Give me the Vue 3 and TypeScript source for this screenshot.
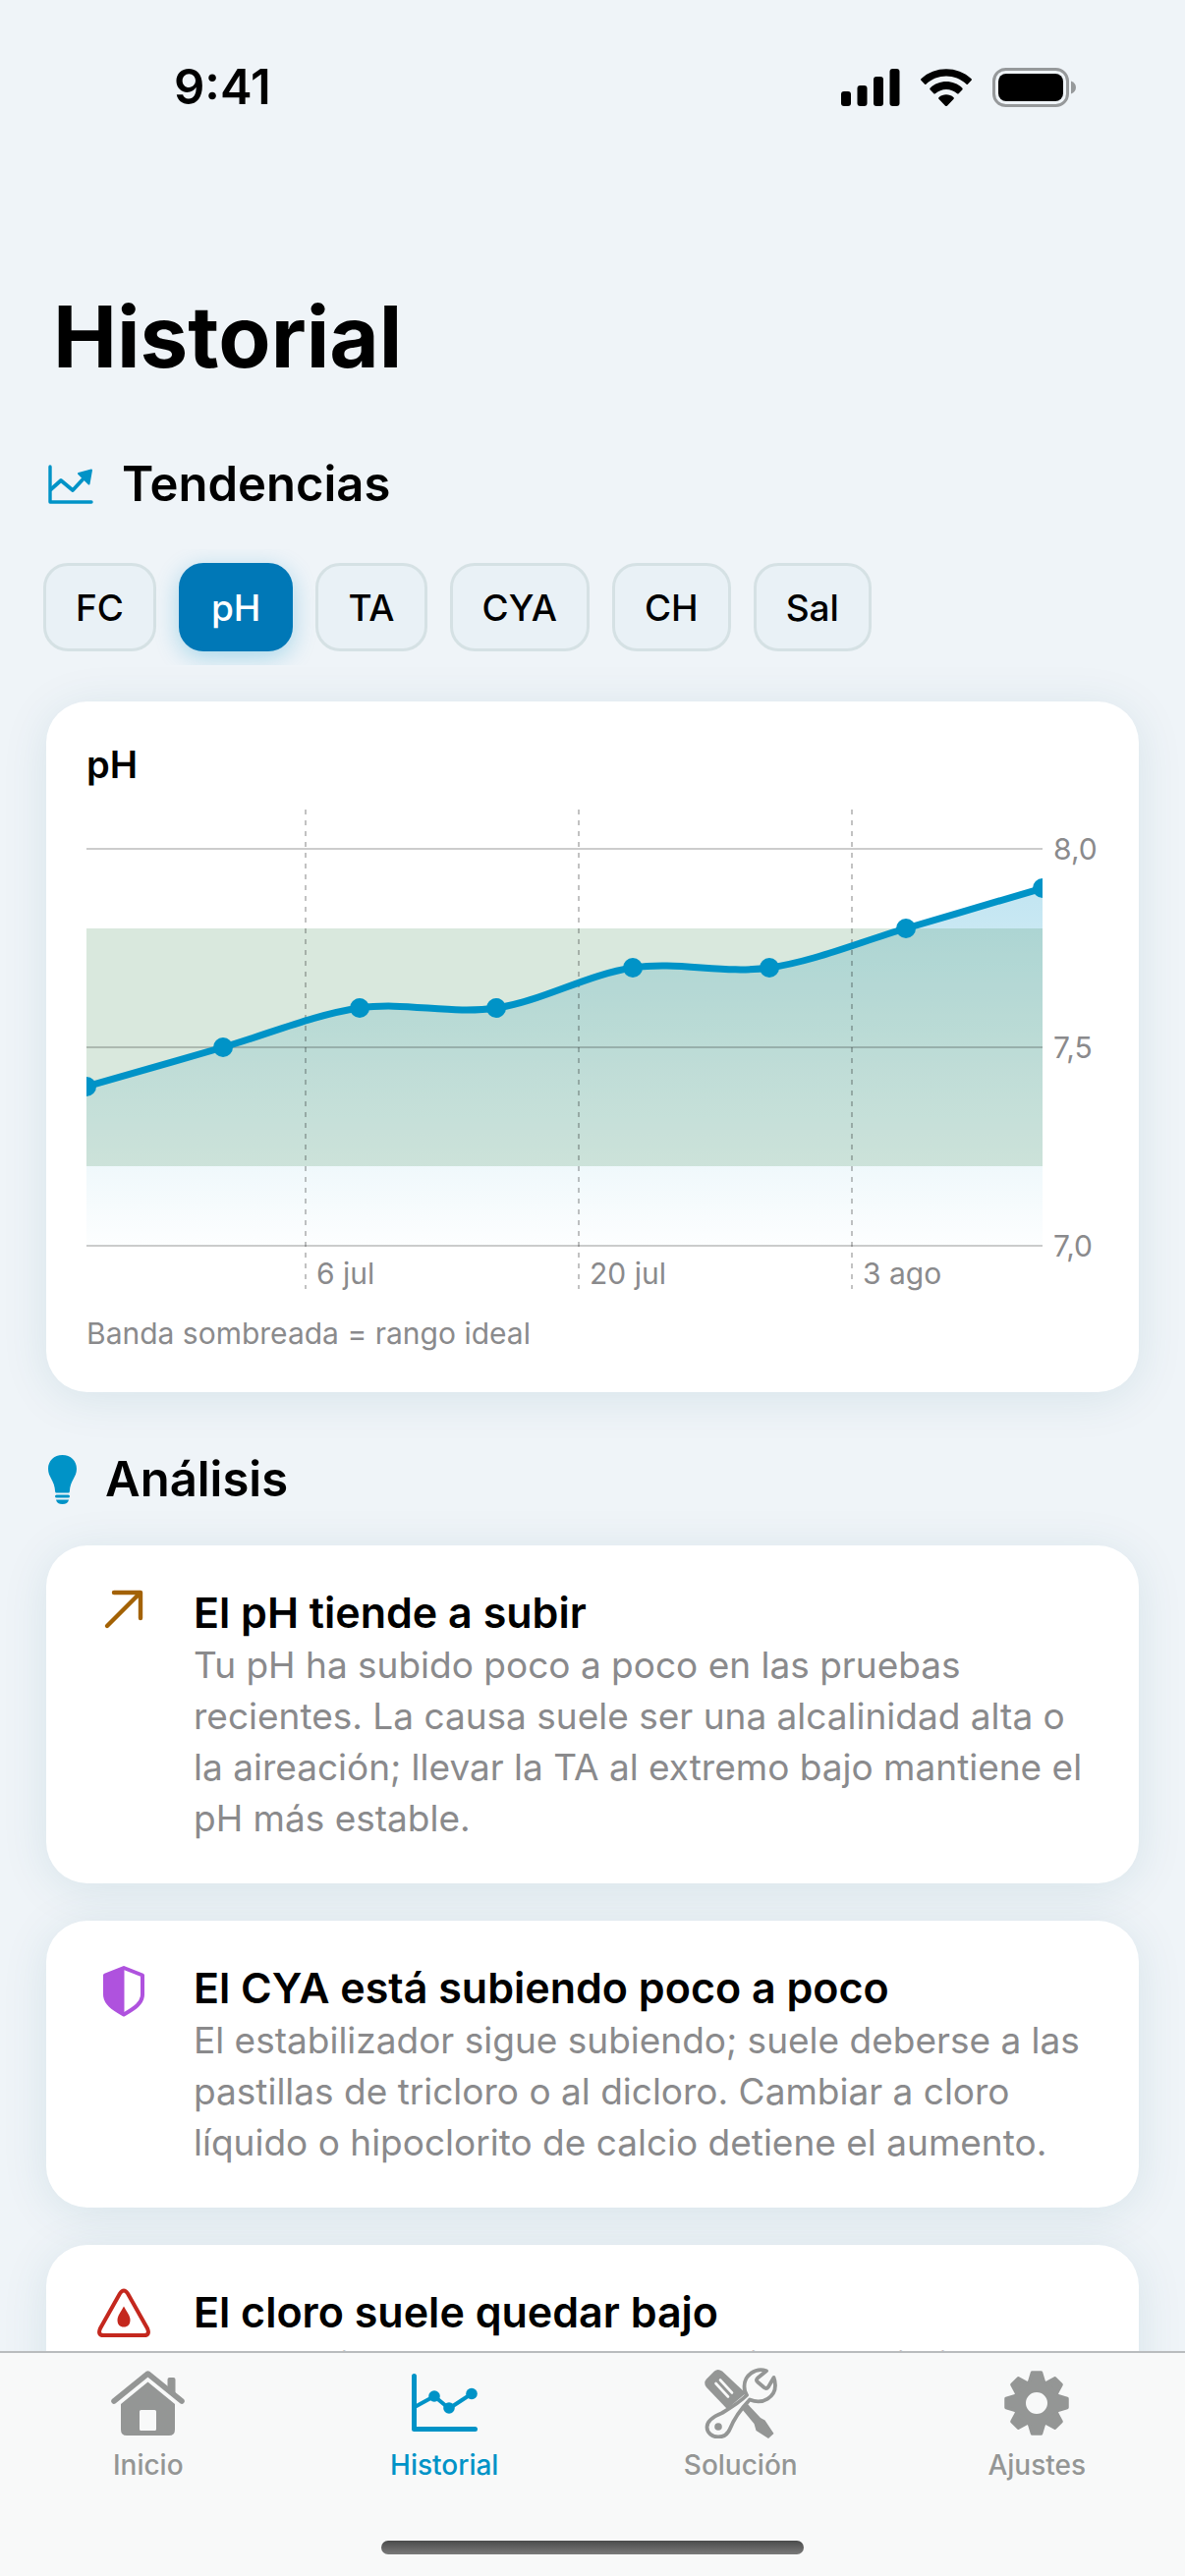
<script setup lang="ts">
import { computed, ref } from 'vue'

type Metric = 'FC' | 'pH' | 'TA' | 'CYA' | 'CH' | 'Sal'
type Icon = 'rise' | 'shield' | 'alert'

interface Insight {
  icon: Icon
  title: string
  body: string
}

const metrics: Metric[] = ['FC', 'pH', 'TA', 'CYA', 'CH', 'Sal']
const selected = ref<Metric>('pH')

const insights: Insight[] = [
  {
    icon: 'rise',
    title: 'El pH tiende a subir',
    body: 'Tu pH ha subido poco a poco en las pruebas recientes. La causa suele ser una alcalinidad alta o la aireación; llevar la TA al extremo bajo mantiene el pH más estable.',
  },
  {
    icon: 'shield',
    title: 'El CYA está subiendo poco a poco',
    body: 'El estabilizador sigue subiendo; suele deberse a las pastillas de tricloro o al dicloro. Cambiar a cloro líquido o hipoclorito de calcio detiene el aumento.',
  },
  {
    icon: 'alert',
    title: 'El cloro suele quedar bajo',
    body: 'El cloro libre ha estado por debajo del objetivo en varias pruebas recientes.',
  },
]

const PLOT_WIDTH = 973
const readings = [7.4, 7.5, 7.6, 7.6, 7.7, 7.7, 7.8, 7.9]
const yTicks = [
  { value: 8, label: '8,0' },
  { value: 7.5, label: '7,5' },
  { value: 7, label: '7,0' },
]
const xTicks = [
  { x: 223, label: '6 jul' },
  { x: 501, label: '20 jul' },
  { x: 779, label: '3 ago' },
]

const yFor = (value: number): number => Math.round(40 + (8 - value) * 404)

const points = computed(() =>
  readings.map((value, i) => ({
    x: (i * PLOT_WIDTH) / (readings.length - 1),
    y: yFor(value),
  })),
)

// Catmull-Rom spline through the readings, written as cubic Béziers
const linePath = computed(() => {
  const p = points.value
  let d = `M${p[0].x} ${p[0].y}`
  for (let i = 0; i < p.length - 1; i++) {
    const before = p[Math.max(i - 1, 0)]
    const from = p[i]
    const to = p[i + 1]
    const after = p[Math.min(i + 2, p.length - 1)]
    d += ` C${from.x + (to.x - before.x) / 6} ${from.y + (to.y - before.y) / 6}`
    d += ` ${to.x - (after.x - from.x) / 6} ${to.y - (after.y - from.y) / 6} ${to.x} ${to.y}`
  }
  return d
})
const areaPath = computed(() => `${linePath.value} V${yFor(7)} H0 Z`)

const teeth = [0, 45, 90, 135, 180, 225, 270, 315]
</script>

<template>
  <div class="screen">
    <header class="status">
      <span class="time">9:41</span>
      <div class="status-icons">
        <svg width="60" height="40" viewBox="0 0 60 40" aria-hidden="true">
          <rect x="0" y="24" width="10" height="15" rx="3" />
          <rect x="16.500" y="18" width="10" height="21" rx="3" />
          <rect x="33" y="9" width="10" height="30" rx="3" />
          <rect x="49.500" y="1" width="10" height="38" rx="3" />
        </svg>
        <svg width="54" height="38" viewBox="0 0 17 12" aria-hidden="true">
          <path d="M8.500 2.400c2.400 0 4.700.9 6.500 2.600.1.1.3.1.4 0l1.200-1.300c.1-.1.1-.4 0-.5C12.100-1 4.900-1 .4 3.200c-.1.1-.1.4 0 .5L1.600 5c.1.1.3.1.4 0C3.800 3.300 6.100 2.400 8.500 2.400Z" />
          <path d="M8.500 6.600c1.300 0 2.600.5 3.500 1.400.1.1.3.1.5 0l1.200-1.300c.1-.2.1-.4 0-.5-2.900-2.800-7.500-2.800-10.400 0-.1.1-.1.4 0 .5L4.500 8c.1.1.3.1.5 0 1-.9 2.200-1.400 3.500-1.400Z" />
          <path d="M10.900 9.200c.1.1.1.4 0 .5l-2.100 2.200c-.1.1-.2.1-.3.1s-.2 0-.3-.1L6.100 9.700c-.1-.1-.1-.4 0-.5 1.400-1.200 3.400-1.200 4.800 0Z" />
        </svg>
        <svg width="86" height="40" viewBox="0 0 86 40" aria-hidden="true">
          <rect x="1.500" y="1.500" width="75" height="37" rx="12" fill="none" stroke="#96999b" stroke-width="3" />
          <rect x="6" y="6" width="66" height="28" rx="8" />
          <path d="M80 13.500c3 1 5 3.500 5 6.500s-2 5.500-5 6.500Z" fill="#96999b" />
        </svg>
      </div>
    </header>

    <main class="content">
      <h1 class="page-title">Historial</h1>

      <h2 class="section-title">
        <svg width="46" height="40" viewBox="0 0 46 40" aria-hidden="true">
          <g fill="none" stroke="#0093c7" stroke-linecap="round" stroke-linejoin="round">
            <path d="M2 2V38H44" stroke-width="3.400" />
            <path d="M3 25L13 16L25 26L38 12" stroke-width="3.800" />
          </g>
          <path d="M44 5.500L31 9L41.500 19.500Z" fill="#0093c7" stroke="#0093c7" stroke-width="2" stroke-linejoin="round" />
        </svg>
        Tendencias
      </h2>

      <div class="chips">
        <button
          v-for="metric in metrics"
          :key="metric"
          type="button"
          class="chip"
          :class="{ active: metric === selected }"
          :aria-pressed="metric === selected"
          @click="selected = metric"
        >
          {{ metric }}
        </button>
      </div>

      <section class="card chart-card">
        <h3 class="chart-title">{{ selected }}</h3>
        <svg class="chart" viewBox="0 0 1030 490" role="img" aria-label="Tendencia de pH">
          <defs>
            <linearGradient id="area-fill" x1="0" y1="0" x2="0" y2="1">
              <stop offset="0" stop-color="#0093c7" stop-opacity="0.24" />
              <stop offset="1" stop-color="#0093c7" stop-opacity="0.01" />
            </linearGradient>
            <clipPath id="plot-area">
              <rect x="0" y="0" :width="PLOT_WIDTH" height="490" />
            </clipPath>
          </defs>
          <path :d="areaPath" fill="url(#area-fill)" />
          <rect class="band" x="0" :y="yFor(7.8)" :width="PLOT_WIDTH" :height="yFor(7.2) - yFor(7.8)" />
          <g v-for="tick in yTicks" :key="tick.label">
            <line class="grid" x1="0" :x2="PLOT_WIDTH" :y1="yFor(tick.value)" :y2="yFor(tick.value)" />
            <text class="axis" :x="PLOT_WIDTH + 11" :y="yFor(tick.value) + 11">{{ tick.label }}</text>
          </g>
          <g v-for="tick in xTicks" :key="tick.label">
            <line class="grid dashed" :x1="tick.x" :x2="tick.x" y1="0" y2="488" />
            <text class="axis" :x="tick.x + 11" y="483">{{ tick.label }}</text>
          </g>
          <g clip-path="url(#plot-area)">
            <path class="line" :d="linePath" />
            <circle v-for="(p, i) in points" :key="i" class="dot" :cx="p.x" :cy="p.y" r="10" />
          </g>
        </svg>
        <p class="legend">Banda sombreada = rango ideal</p>
      </section>

      <h2 class="section-title analysis">
        <svg width="29" height="50" viewBox="0 0 29 50" fill="#0093c7" aria-hidden="true">
          <path d="M14.500 0C6 0 0 6 0 14C0 23 6.500 25 7.200 37.500Q7.300 38.500 8.300 38.500H20.700Q21.700 38.500 21.800 37.500C22.500 25 29 23 29 14C29 6 23 0 14.500 0Z" />
          <rect x="7" y="40.500" width="15" height="3" rx="1.500" />
          <path d="M8 45.500H21C20.500 48.500 18 50 14.500 50S8.500 48.500 8 45.500Z" />
        </svg>
        Análisis
      </h2>

      <div class="insights">
        <article v-for="item in insights" :key="item.title" class="card insight">
          <svg class="insight-icon" width="74" height="60" viewBox="0 0 74 60" aria-hidden="true">
            <path
              v-if="item.icon === 'rise'"
              d="M20 42L54 8M27 8H54V34"
              fill="none"
              stroke="#a36205"
              stroke-width="4.400"
              stroke-linecap="round"
              stroke-linejoin="round"
            />
            <g v-else-if="item.icon === 'shield'" fill="#af52de" stroke="#af52de" stroke-linejoin="round">
              <path d="M37 8L56 15.500V35C56 44 48 49 37 55.500C26 49 18 44 18 35V15.500Z" fill="none" stroke-width="4" />
              <path d="M37 8L18 15.500V35C18 44 26 49 37 55.500Z" stroke-width="1" />
            </g>
            <g v-else>
              <path
                d="M33 9.500Q37 3.500 41 9.500L61 45Q64 52 57.500 52H16.500Q10 52 13 45Z"
                fill="none"
                stroke="#c4281e"
                stroke-width="4"
                stroke-linejoin="round"
              />
              <path d="M37 22.500C40 28 43.500 32 43.500 36.500C43.500 41 41 43.500 37 43.500S30.500 41 30.500 36.500C30.500 32 34 28 37 22.500Z" fill="#c4281e" />
            </g>
          </svg>
          <div class="insight-text">
            <h3 class="insight-title">{{ item.title }}</h3>
            <p class="insight-body">{{ item.body }}</p>
          </div>
        </article>
      </div>
    </main>

    <nav class="tabs">
      <a class="tab" href="#inicio">
        <svg width="75" height="72" viewBox="0 -3 75 72" fill="#949695" aria-hidden="true">
          <path d="M3 31L37.500 3L72 31" fill="none" stroke="#949695" stroke-width="5.500" stroke-linecap="round" stroke-linejoin="round" />
          <path d="M57.500 20V9Q57.500 7 59.500 7H63.500Q65.500 7 65.500 9V27Z" />
          <path fill-rule="evenodd" d="M37.500 11.500L65 34V60Q65 66 59 66H16Q10 66 10 60V34ZM30.500 40Q29 40 29 41.500V59.500Q29 61 30.500 61H44.500Q46 61 46 59.500V41.500Q46 40 44.500 40Z" />
        </svg>
        Inicio
      </a>
      <a class="tab current" href="#historial" aria-current="page">
        <svg width="67" height="72" viewBox="0 -6 67 72" fill="#0093c7" stroke="#0093c7" aria-hidden="true">
          <g fill="none" stroke-linecap="round" stroke-linejoin="round">
            <path d="M2.500 2.500V56.500H64.500" stroke-width="5" />
            <path d="M3 34L23 23L38 35.500L61 20.500" stroke-width="4" />
          </g>
          <g stroke="none">
            <circle cx="23" cy="23" r="5.800" />
            <circle cx="38" cy="35" r="5.800" />
            <circle cx="61" cy="20.500" r="5.800" />
          </g>
        </svg>
        Historial
      </a>
      <a class="tab" href="#solucion">
        <svg width="74" height="72" viewBox="0 0 74 72" fill="#949695" aria-hidden="true">
          <path d="M10 3.500Q13.500 0.500 18 3.500L42 26L23 42L2 20Q-1.500 15.500 2 11.500Z" />
          <path d="M38 42L43 36L57 51L61.500 53.500L70.500 67L65 72L52.500 64L50.500 57Z" />
          <path d="M11.500 16L24 29.500M16 12.500L28 25.500" fill="none" stroke="#f8f9f9" stroke-width="2.600" stroke-linecap="round" />
          <path
            d="M63 3.200C52 -1 40.500 8 40.500 19C40.500 23 41.500 26 43 28C36 35 28 40 18 46C8 50 2.500 54 2.500 60.500C2.500 66.500 8 70.500 14 70.500C20 70.500 24 67 26 62C30 52 36 43 46 32.500C60 38.500 72 29 72 18C72 15 71.500 12.500 70.500 10L65 19.500Q63 22 60.500 20L54 14.500Q52 12.500 54 10.500Z"
            fill="#f8f9f9"
            stroke="#949695"
            stroke-width="3.800"
            stroke-linejoin="round"
          />
          <circle cx="14" cy="60" r="3.800" />
        </svg>
        Solución
      </a>
      <a class="tab" href="#ajustes">
        <svg width="66" height="72" viewBox="-33 -36 66 72" fill="#949695" aria-hidden="true">
          <circle r="17.500" fill="none" stroke="#949695" stroke-width="13" />
          <path
            v-for="angle in teeth"
            :key="angle"
            d="M-7.500 -21L-4.500 -31H4.500L7.500 -21Z"
            :transform="`rotate(${angle})`"
            stroke="#949695"
            stroke-width="3.500"
            stroke-linejoin="round"
          />
        </svg>
        Ajustes
      </a>
      <div class="home-indicator"></div>
    </nav>
  </div>
</template>

<style>
body {
  background: #eff4f8;
}
</style>

<style scoped>
.screen {
  display: flex;
  flex-direction: column;
  height: 100vh;
  overflow: hidden;
  background: #eff4f8;
  color: #000;
  font-family: Inter, 'Liberation Sans', sans-serif;
}

h1,
h2,
h3,
p {
  margin: 0;
}

.status {
  display: flex;
  flex: none;
  justify-content: space-between;
  align-items: center;
  height: 60px;
  padding: 59px 110px 170px 177px;
}

.time {
  font-size: 49px;
  font-weight: 600;
  line-height: 60px;
}

.status-icons {
  display: flex;
  align-items: center;
  gap: 20px;
}

.content {
  flex: 1;
  min-height: 0;
  overflow-y: auto;
  scrollbar-width: none;
}

.page-title {
  padding: 0 54px;
  font-size: 87px;
  font-weight: 700;
  line-height: 108px;
}

.section-title {
  display: flex;
  align-items: center;
  gap: 29px;
  margin-top: 66px;
  padding: 0 49px;
  font-size: 49px;
  font-weight: 600;
  line-height: 60px;
}

.section-title.analysis {
  margin-top: 59px;
}

.chips {
  display: flex;
  gap: 23px;
  margin-top: 36px;
  padding: 14px 44px;
  overflow-x: auto;
  scrollbar-width: none;
}

.chip {
  flex: none;
  height: 90px;
  padding: 0 30px;
  border: 3px solid #d5e1e4;
  border-radius: 25px;
  background: #e9f1f6;
  color: #000;
  font-family: inherit;
  font-size: 37px;
  font-weight: 500;
}

.chip.active {
  border-color: #0078b7;
  background: #0078b7;
  box-shadow: 0 6px 24px rgba(0, 147, 201, 0.3);
  color: #fff;
}

.card {
  margin: 0 47px;
  border-radius: 42px;
  background: #fff;
  box-shadow: 0 6px 48px rgba(0, 90, 110, 0.1);
}

.chart-card {
  margin-top: 37px;
  padding: 40px 41px;
}

.chart-title {
  font-size: 38px;
  font-weight: 600;
  line-height: 48px;
}

.chart {
  display: block;
  width: 100%;
  margin: 22px 0 23px;
}

.band {
  fill: rgba(65, 140, 85, 0.2);
}

.grid {
  stroke: rgba(0, 0, 0, 0.2);
  stroke-width: 2;
}

.dashed {
  stroke: rgba(0, 0, 0, 0.24);
  stroke-dasharray: 5 6;
}

.axis {
  fill: #8a8a8c;
  font-size: 30px;
}

.line {
  fill: none;
  stroke: #0093c7;
  stroke-width: 7;
}

.dot {
  fill: #0093c7;
}

.legend {
  color: #8a8a8c;
  font-size: 30px;
  line-height: 40px;
}

.insights {
  display: flex;
  flex-direction: column;
  gap: 38px;
  margin-top: 37px;
  padding-bottom: 38px;
}

.insight {
  display: flex;
  gap: 34px;
  padding: 40px 42px;
}

.insight-icon {
  flex: none;
}

.insight-title {
  font-size: 43px;
  font-weight: 600;
  line-height: 56px;
}

.insight-body {
  color: #8a8a8c;
  font-size: 37px;
  line-height: 52px;
}

.tabs {
  display: grid;
  flex: none;
  grid-template-columns: repeat(4, 1fr);
  padding: 15px 0 22px;
  border-top: 2px solid #b9bcbe;
  background: #f8f9f9;
}

.tab {
  display: flex;
  flex-direction: column;
  align-items: center;
  gap: 7px;
  color: #949695;
  font-size: 28px;
  font-weight: 500;
  line-height: 40px;
  text-decoration: none;
}

.tab.current {
  color: #0093c7;
}

.home-indicator {
  grid-column: 1 / -1;
  justify-self: center;
  width: 430px;
  height: 14px;
  margin-top: 57px;
  border-radius: 7px;
  background: linear-gradient(#4a4b4b, #7a7a7a);
}
</style>
